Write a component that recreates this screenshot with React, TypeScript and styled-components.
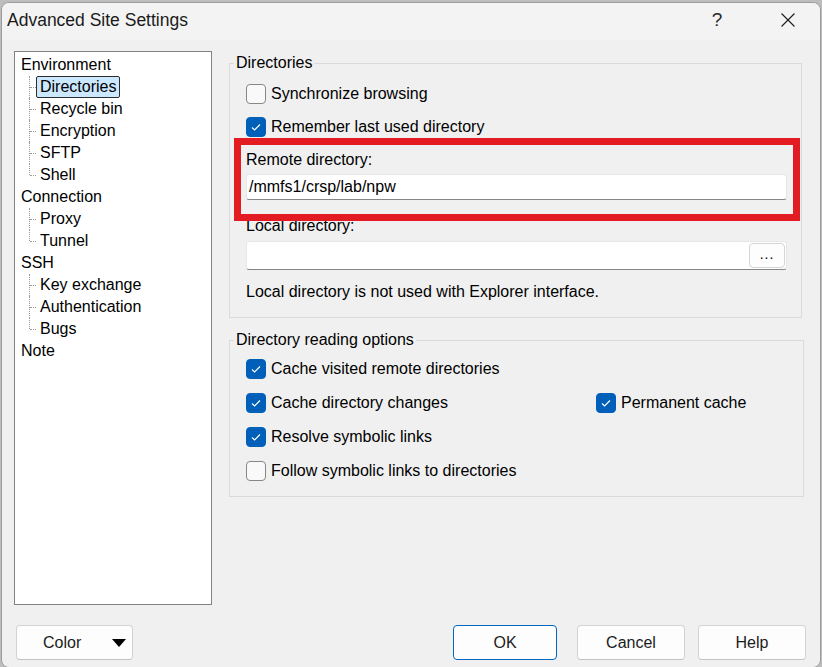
import React from 'react';
import styled, { createGlobalStyle } from 'styled-components';

const GlobalStyle = createGlobalStyle`
    html, body {
        margin: 0;
        padding: 0;
    }
    body {
        background: #bdbdbd;
        font-family: "Liberation Sans", Arial, sans-serif;
        font-size: 16px;
        color: #000;
        overflow: hidden;
    }
    * {
        box-sizing: border-box;
    }
`;

type TreeItem = { label: string; depth: 0 | 1; last?: boolean; selected?: boolean };

const tree: TreeItem[] = [
    { label: 'Environment', depth: 0 },
    { label: 'Directories', depth: 1, selected: true },
    { label: 'Recycle bin', depth: 1 },
    { label: 'Encryption', depth: 1 },
    { label: 'SFTP', depth: 1 },
    { label: 'Shell', depth: 1, last: true },
    { label: 'Connection', depth: 0 },
    { label: 'Proxy', depth: 1 },
    { label: 'Tunnel', depth: 1, last: true },
    { label: 'SSH', depth: 0 },
    { label: 'Key exchange', depth: 1 },
    { label: 'Authentication', depth: 1 },
    { label: 'Bugs', depth: 1, last: true },
    { label: 'Note', depth: 0 },
];

const CheckBox: React.FC<{ checked?: boolean }> = ({ checked }) => (
    <Box $checked={checked}>
        {checked && (
            <svg width="20" height="20" viewBox="0 0 20 20">
                <polyline points="6,10.5 8.6,13 14,7.5" fill="none" stroke="#fff" strokeWidth="1.1" />
            </svg>
        )}
    </Box>
);

const Check: React.FC<{ checked?: boolean; children: React.ReactNode }> = ({ checked, children }) => (
    <CheckRow>
        <CheckBox checked={checked} />
        <span>{children}</span>
    </CheckRow>
);

export default function App() {
    return (
        <>
            <GlobalStyle />
            <Window>
                <TitleBar>
                    <Title>Advanced Site Settings</Title>
                    <CaptionButton $width={78}>?</CaptionButton>
                    <CaptionButton $width={64}>
                        <svg width="16" height="16" viewBox="0 0 16 16">
                            <path d="M1.5 1.5 L14.5 14.5 M14.5 1.5 L1.5 14.5" stroke="#1b1b1b" strokeWidth="1.1" />
                        </svg>
                    </CaptionButton>
                </TitleBar>

                <Body>
                    <Main>
                        <Tree>
                            {tree.map((item) => (
                                <TreeRow key={item.label} $depth={item.depth} $last={item.last}>
                                    <TreeLabel $selected={item.selected}>{item.label}</TreeLabel>
                                </TreeRow>
                            ))}
                        </Tree>

                        <Pane>
                            <Group $right={2}>
                                <Legend>Directories</Legend>
                                <Check>Synchronize browsing</Check>
                                <Check checked>Remember last used directory</Check>

                                <RemoteBlock>
                                    <FieldLabel>Remote directory:</FieldLabel>
                                    <Input>/mmfs1/crsp/lab/npw</Input>
                                    <Highlight />
                                </RemoteBlock>

                                <FieldLabel $top={16}>Local directory:</FieldLabel>
                                <Input $tall>
                                    <BrowseButton>...</BrowseButton>
                                </Input>
                                <Note>Local directory is not used with Explorer interface.</Note>
                            </Group>

                            <Group $top={12} $bottomPad={8}>
                                <Legend>Directory reading options</Legend>
                                <OptionGrid>
                                    <Check checked>Cache visited remote directories</Check>
                                    <span />
                                    <Check checked>Cache directory changes</Check>
                                    <Check checked>Permanent cache</Check>
                                    <Check checked>Resolve symbolic links</Check>
                                    <span />
                                    <Check>Follow symbolic links to directories</Check>
                                    <span />
                                </OptionGrid>
                            </Group>
                        </Pane>
                    </Main>

                    <Footer>
                        <DialogButton $width={117} $dropdown>
                            <span>Color</span>
                            <svg width="14" height="8" viewBox="0 0 14 8">
                                <polygon points="0,0 14,0 7,8" fill="#000" />
                            </svg>
                        </DialogButton>
                        <ButtonGroup>
                            <DialogButton $width={104} $primary>OK</DialogButton>
                            <DialogButton $width={108} $gap={20}>Cancel</DialogButton>
                            <DialogButton $width={108} $gap={13}>Help</DialogButton>
                        </ButtonGroup>
                    </Footer>
                </Body>
            </Window>
        </>
    );
}

const Window = styled.div`
    margin: 2px 0 0 1px;
    width: 820px;
    height: 666px;
    border: 1px solid #9c9c9c;
    border-radius: 8px;
    background: #f0f0f0;
    overflow: hidden;
    display: flex;
    flex-direction: column;
`;

const TitleBar = styled.div`
    height: 37px;
    flex-shrink: 0;
    display: flex;
    align-items: center;
    padding: 0 0 3px 5px;
    background: #f3f3f3;
`;

const Title = styled.div`
    flex: 1;
    font-size: 17.5px;
    color: #1a1a1a;
`;

const CaptionButton = styled.div<{ $width: number }>`
    width: ${(p) => p.$width}px;
    height: 34px;
    display: flex;
    align-items: center;
    justify-content: center;
    font-size: 19px;
    color: #2a2a2a;
`;

const Body = styled.div`
    flex: 1;
    display: flex;
    flex-direction: column;
    padding: 11px 14px 0 12px;
`;

const Main = styled.div`
    display: flex;
    gap: 17px;
    height: 554px;
`;

const Tree = styled.ul`
    list-style: none;
    margin: 0;
    width: 198px;
    height: 554px;
    padding: 2px 0 0 0;
    background: #fff;
    border: 1px solid #828282;
`;

const TreeRow = styled.li<{ $depth: number; $last?: boolean }>`
    position: relative;
    height: 22px;
    padding-left: ${(p) => (p.$depth ? 21 : 2)}px;

    ${(p) =>
        p.$depth
            ? `
    &::before {
        content: '';
        position: absolute;
        left: 14px;
        top: 0;
        height: ${p.$last ? 11 : 22}px;
        border-left: 1px dotted #9a9a9a;
    }
    &::after {
        content: '';
        position: absolute;
        left: 15px;
        top: 11px;
        width: 6px;
        border-top: 1px dotted #9a9a9a;
    }`
            : ''}
`;

const TreeLabel = styled.span<{ $selected?: boolean }>`
    display: inline-block;
    height: 22px;
    line-height: 20px;
    padding: 0 3px;
    border: 1px solid ${(p) => (p.$selected ? '#2d2d2d' : 'transparent')};
    border-radius: 2px;
    background: ${(p) => (p.$selected ? '#cce8ff' : 'transparent')};
`;

const Pane = styled.div`
    width: 575px;
    display: flex;
    flex-direction: column;
`;

const Group = styled.fieldset<{ $top?: number; $right?: number; $bottomPad?: number }>`
    margin: ${(p) => p.$top ?? 2}px ${(p) => p.$right ?? 0}px 0 0;
    padding: 4px 14px ${(p) => p.$bottomPad ?? 15}px 16px;
    border: 1px solid #dadada;
    min-width: 0;
`;

const Legend = styled.legend`
    margin-left: -12px;
    padding: 0 2px;
    line-height: 20px;
    height: 20px;
`;

const CheckRow = styled.label`
    display: flex;
    align-items: center;
    gap: 5px;
    height: 33px;
    white-space: nowrap;
`;

const Box = styled.span<{ $checked?: boolean }>`
    width: 20px;
    height: 20px;
    flex-shrink: 0;
    border-radius: 4px;
    border: 1px solid ${(p) => (p.$checked ? '#005fb8' : '#878787')};
    background: ${(p) => (p.$checked ? '#005fb8' : '#f9f9f9')};
    display: flex;
    align-items: center;
    justify-content: center;

    svg {
        margin: -1px;
    }
`;

const OptionGrid = styled.div`
    display: grid;
    grid-template-columns: 350px 1fr;
    margin-top: -2px;

    ${CheckRow} {
        height: 34px;
    }
`;

const RemoteBlock = styled.div`
    position: relative;
    margin-top: 7px;
`;

const Highlight = styled.div`
    position: absolute;
    top: -12px;
    left: -12px;
    right: -13px;
    bottom: -21px;
    border: 7px solid #e31c23;
    pointer-events: none;
    z-index: 2;
`;

const FieldLabel = styled.div<{ $top?: number }>`
    margin-top: ${(p) => p.$top ?? 0}px;
    line-height: 20px;
    height: 20px;
`;

const Input = styled.div<{ $tall?: boolean }>`
    margin-top: ${(p) => (p.$tall ? 5 : 4)}px;
    height: ${(p) => (p.$tall ? 29 : 26)}px;
    display: flex;
    align-items: center;
    justify-content: ${(p) => (p.$tall ? 'flex-end' : 'flex-start')};
    padding: ${(p) => (p.$tall ? '0 1px 0 0' : '0 0 0 2px')};
    background: #fff;
    border: 1px solid #e6e6e6;
    border-bottom-color: #868686;
    border-radius: 3px;
    white-space: nowrap;
`;

const BrowseButton = styled.div`
    width: 36px;
    height: 25px;
    display: flex;
    align-items: center;
    justify-content: center;
    padding-bottom: 4px;
    font-size: 14px;
    letter-spacing: 1px;
    background: #fdfdfd;
    border: 1px solid #d5d5d5;
    border-radius: 4px;
`;

const Note = styled.div`
    margin-top: 12px;
    line-height: 20px;
    height: 20px;
`;

const Footer = styled.div`
    display: flex;
    align-items: center;
    margin-top: 20px;
    padding-left: 2px;
`;

const ButtonGroup = styled.div`
    display: flex;
    margin-left: auto;
`;

const DialogButton = styled.div<{ $width: number; $gap?: number; $primary?: boolean; $dropdown?: boolean }>`
    width: ${(p) => p.$width}px;
    height: 35px;
    margin-left: ${(p) => p.$gap ?? 0}px;
    display: flex;
    align-items: center;
    justify-content: ${(p) => (p.$dropdown ? 'space-between' : 'center')};
    padding: ${(p) => (p.$dropdown ? '0 6px 0 26px' : '0')};
    background: #fdfdfd;
    border: 1px solid ${(p) => (p.$primary ? '#0067c0' : '#d3d3d3')};
    border-bottom-color: ${(p) => (p.$primary ? '#0067c0' : '#c2c2c2')};
    border-radius: 4px;
    color: #1b1b1b;
`;
